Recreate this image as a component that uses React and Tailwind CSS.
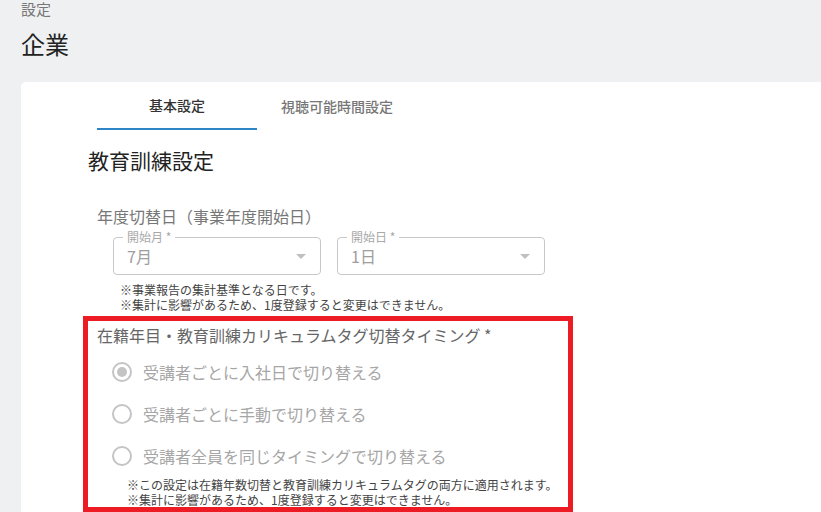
import React from 'react';

const SelectBox = ({ label, value }) => (
  <div className="relative w-[208px] h-[38px] border border-[#c8c8c8] rounded-[4px] flex items-center pl-[13px] pr-[14px]">
    {/* floating label in the notch */}
    <span className="absolute -top-[9px] left-[9px] bg-white px-[4px] text-[12px] leading-[16px] text-[#a8a8a8]">
      {label}
    </span>
    <span className="flex-1 text-[16px] leading-[20px] text-[#9e9e9e]">{value}</span>
    <svg width="10" height="5" viewBox="0 0 10 5" className="mt-[1px]">
      <path d="M0 0h10L5 5z" fill="#c0c0c0" />
    </svg>
  </div>
);

const Radio = ({ checked, label }) => (
  <div className="h-[42px] flex items-center pl-[24px] gap-[11px]">
    <span className="w-5 h-5 rounded-full border-2 border-[#c4c4c4] flex items-center justify-center">
      {checked && <span className="w-[10px] h-[10px] rounded-full bg-[#c4c4c4]" />}
    </span>
    <span className="text-[16px] leading-[24px] text-[#a6a6a6]">{label}</span>
  </div>
);

const App = () => {
  return (
    <div
      className="bg-[#eff0f2] h-[512px] overflow-hidden flex flex-col"
      style={{ fontFamily: '"Noto Sans CJK JP", "Noto Sans", sans-serif' }}
    >
      {/* Page header */}
      <div className="pl-[21px]">
        <div className="text-[15px] leading-[18px] text-[#777]">設定</div>
        <h1 className="mt-[10px] text-[24px] leading-[32px] text-[#222]">企業</h1>
      </div>

      {/* Card */}
      <div className="mt-[22px] ml-[21px] flex-1 bg-white rounded-tl-[5px]">
        {/* Tabs */}
        <div className="flex pl-[76px]">
          <div className="w-[160px] h-[48px] flex items-center justify-center border-b-2 border-[#2f86c6] text-[14px] font-medium text-[#333]">
            基本設定
          </div>
          <div className="w-[160px] h-[48px] flex items-center justify-center text-[14px] font-medium text-[#777]">
            視聴可能時間設定
          </div>
        </div>

        <div className="pl-[67px]">
          <h2 className="mt-[16px] text-[21px] leading-[28px] text-[#222]">教育訓練設定</h2>

          {/* 年度切替日 */}
          <div className="mt-[30px] ml-[9px] text-[16px] leading-[24px] text-[#777]">
            年度切替日（事業年度開始日）
          </div>
          <div className="mt-[9px] ml-[25px] flex gap-[16px]">
            <SelectBox label="開始月 *" value="7月" />
            <SelectBox label="開始日 *" value="1日" />
          </div>
          <div className="mt-[7px] ml-[32px] text-[12px] leading-[15px] text-[#444]">
            <p>※事業報告の集計基準となる日です。</p>
            <p>※集計に影響があるため、1度登録すると変更はできません。</p>
          </div>

          {/* Highlighted timing setting */}
          <div className="mt-[4px] -ml-[5px] w-[490px] border-[5px] border-[#ed1c24] pt-[2px]">
            <div className="pl-[9px] text-[16px] leading-[24px] text-[#666]">
              在籍年目・教育訓練カリキュラムタグ切替タイミング *
            </div>
            <div className="mt-[4px]">
              <Radio checked label="受講者ごとに入社日で切り替える" />
              <Radio label="受講者ごとに手動で切り替える" />
              <Radio label="受講者全員を同じタイミングで切り替える" />
            </div>
            <div className="pl-[39px] text-[12px] leading-[15px] text-[#444]">
              <p>※この設定は在籍年数切替と教育訓練カリキュラムタグの両方に適用されます。</p>
              <p>※集計に影響があるため、1度登録すると変更はできません。</p>
            </div>
          </div>
        </div>
      </div>
    </div>
  );
};

export default App;
